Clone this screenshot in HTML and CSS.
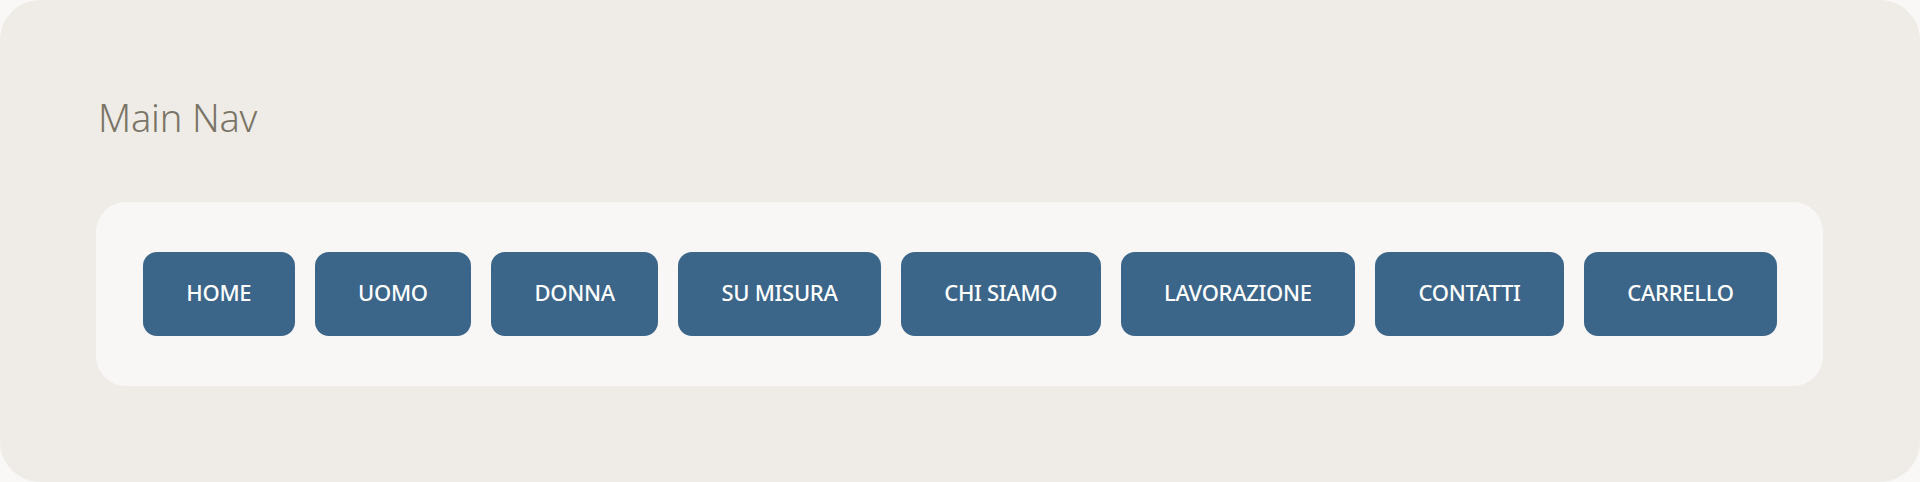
FILE: index.html
```html
<!DOCTYPE html>
<html lang="it">

<head>
  <meta charset="UTF-8">
  <meta name="viewport" content="width=device-width, initial-scale=1.0">
  <title>Main Nav</title>
  <link rel="stylesheet" href="styles.css">
</head>

<body>
  <section class="frame">
    <h1 class="frame-title">Main Nav</h1>

    <!-- pannello con i bottoni della navigazione -->
    <nav class="nav-panel">
      <a class="nav-btn" href="#/home/">HOME</a>
      <a class="nav-btn" href="#/uomo/">UOMO</a>
      <a class="nav-btn" href="#/donna/">DONNA</a>
      <a class="nav-btn" href="#/su-misura/">SU MISURA</a>
      <a class="nav-btn" href="#/chi-siamo/">CHI SIAMO</a>
      <a class="nav-btn" href="#/lavorazione/">LAVORAZIONE</a>
      <a class="nav-btn" href="#/contatti/">CONTATTI</a>
      <a class="nav-btn" href="#/carrello/">CARRELLO</a>
    </nav>
  </section>
</body>

</html>
```

FILE: styles.css
```css
html,
body {
  margin: 0;
  padding: 0;
  background: #f9f8f6;
}

body {
  font-family: "Noto Sans", "Open Sans", Arial, sans-serif;
}

.frame {
  box-sizing: border-box;
  height: 482px;
  padding: 94px 97px 0 96px;
  background: #efece7;
  border-radius: 40px;
}

.frame-title {
  margin: 0 0 0 2px;
  font-size: 38px;
  font-weight: 300;
  line-height: 46px;
  letter-spacing: -0.2px;
  color: #7a7466;
}

.nav-panel {
  display: flex;
  gap: 20px;
  margin-top: 62px;
  padding: 50px 46px 50px 47px;
  background: #f8f7f5;
  border-radius: 30px;
}

.nav-btn {
  flex: 1 1 auto;
  display: flex;
  align-items: center;
  justify-content: center;
  box-sizing: border-box;
  height: 84px;
  padding: 0 14px 5px;
  background: #3b6589;
  border-radius: 14px;
  color: #fff;
  font-size: 22px;
  font-weight: 500;
  letter-spacing: -0.3px;
  text-decoration: none;
  white-space: nowrap;
}
```
